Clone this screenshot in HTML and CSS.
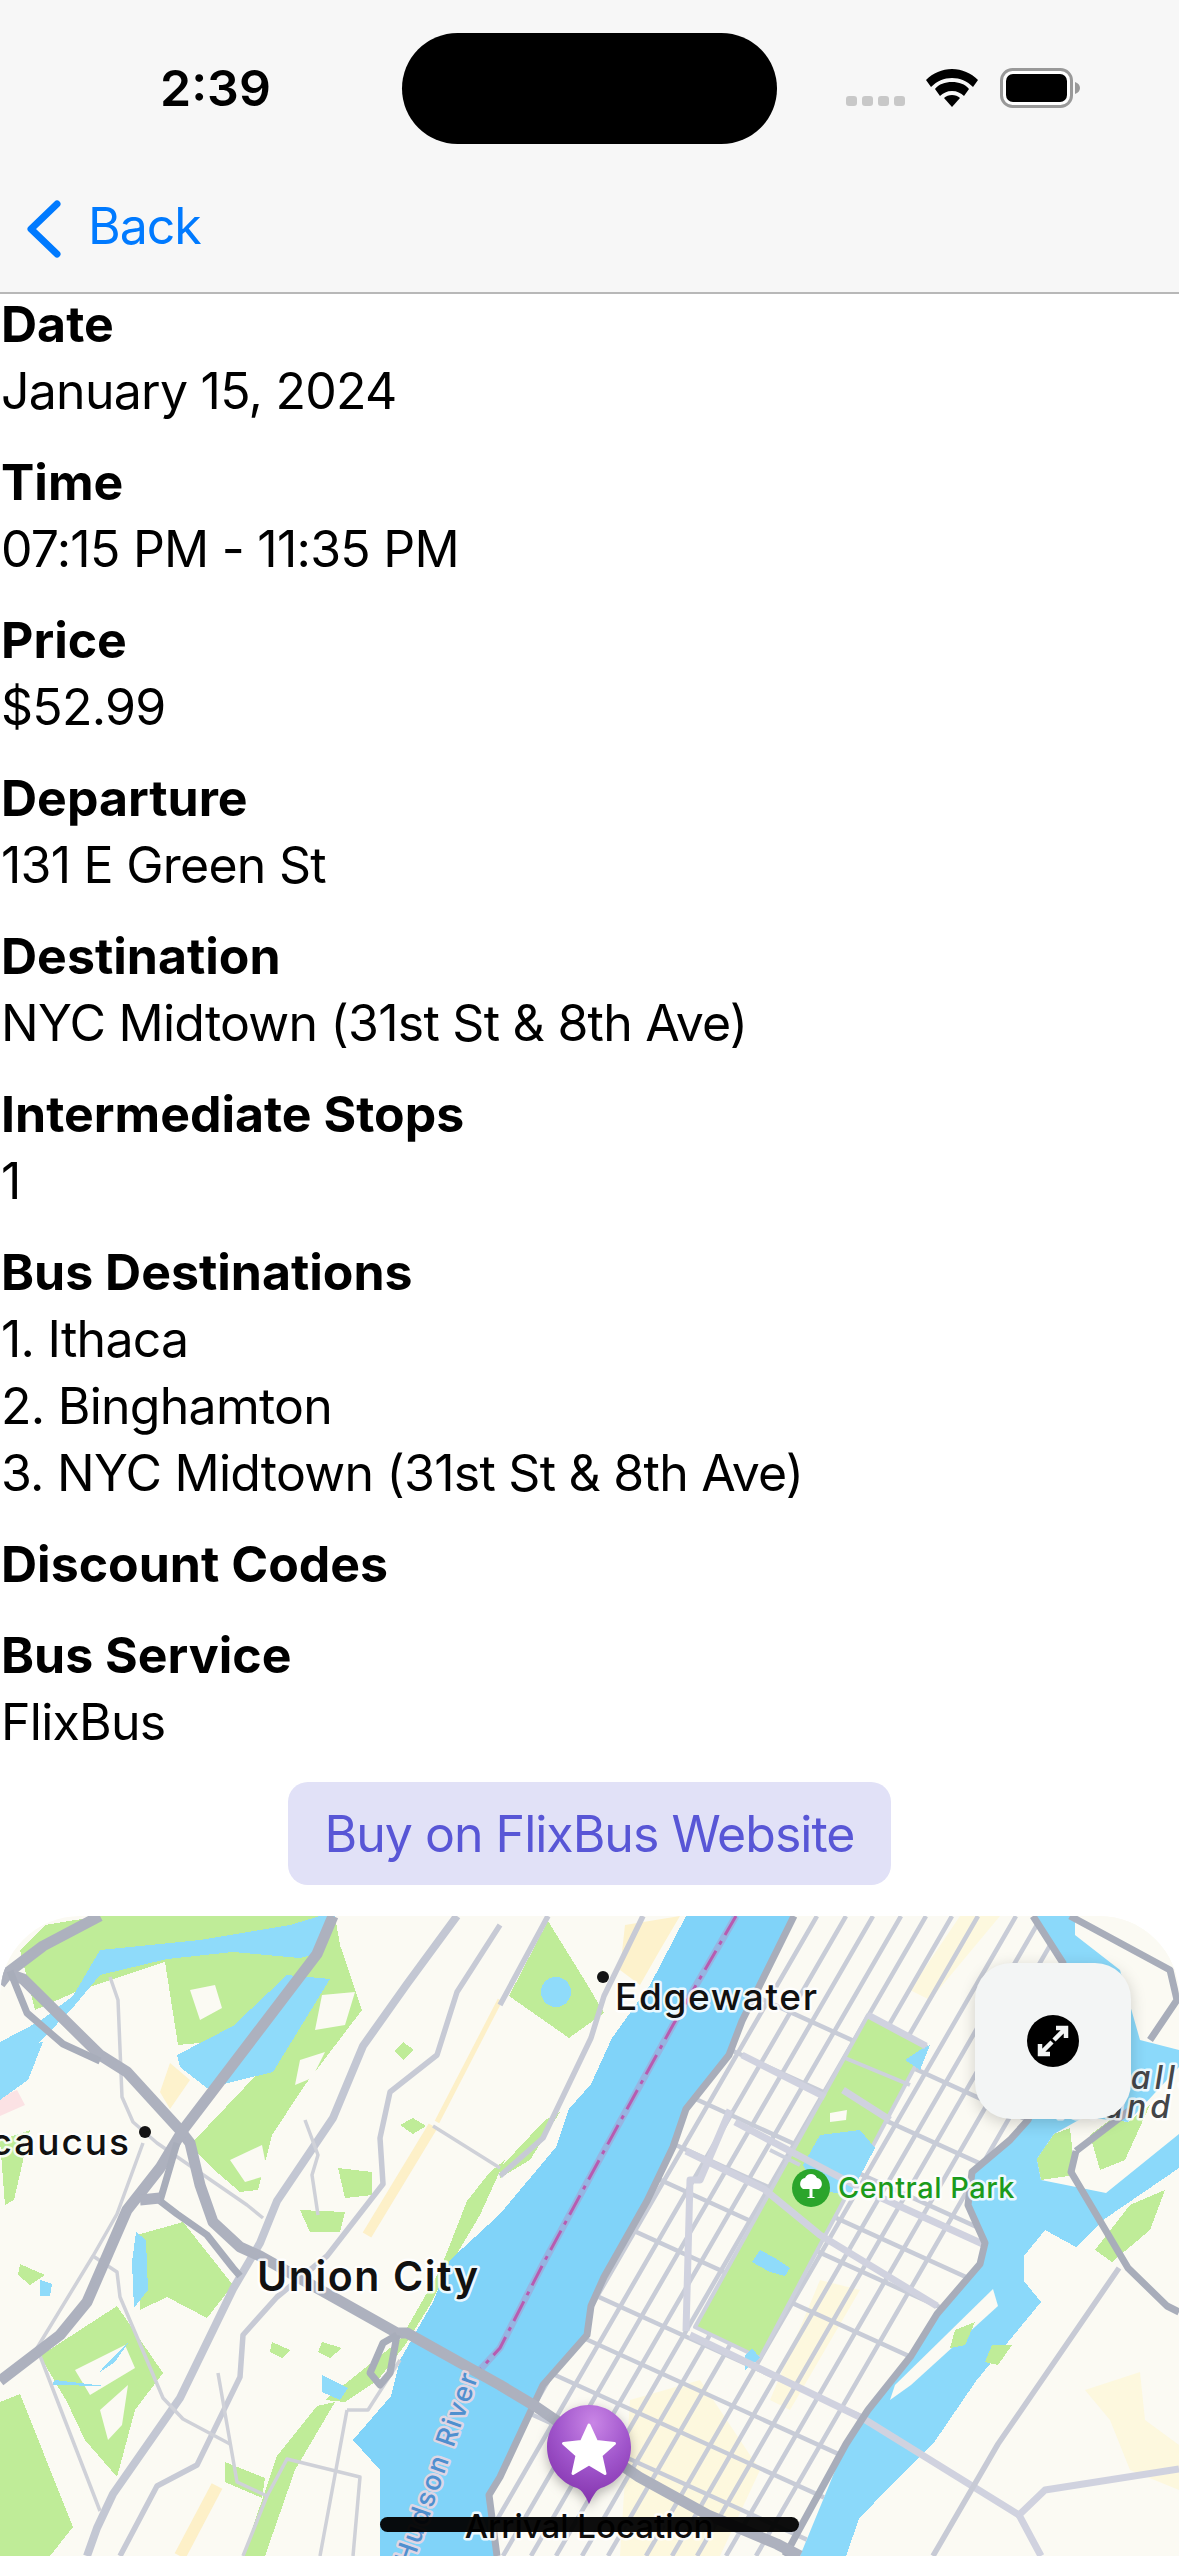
FILE: index.html
```html
<!DOCTYPE html>
<html lang="en">
<head>
<meta charset="utf-8">
<title>Trip details</title>
<link rel="stylesheet" href="styles.css">
</head>
<body>
<div class="page">
  <header class="top">
    <div class="status">
      <span class="clock">2:39</span>
      <div class="island"></div>
      <div class="indicators">
        <div class="signal"><i></i><i></i><i></i><i></i></div>
        <svg class="wifi" width="52" height="38" viewBox="0 0 52 38">
          <path class="ico-black" d="M26 0C16 0 7 4 0 11l5 7C11 12 18 9 26 9s15 3 21 9l5-7C45 4 36 0 26 0z"/>
          <path class="ico-black" d="M26 13c-7 0-13 2-17 7l5 7c3-3 7-5 12-5s9 2 12 5l5-7c-4-5-10-7-17-7z"/>
          <path class="ico-black" d="M26 26c-3 0-6 1-8 3l8 9 8-9c-2-2-5-3-8-3z"/>
        </svg>
        <svg class="battery" width="80" height="40" viewBox="0 0 80 40">
          <rect class="bat-edge" x="1.5" y="1.5" width="70" height="37" rx="11"/>
          <rect class="ico-black" x="6" y="6" width="61" height="28" rx="7"/>
          <path class="bat-tip" d="M75 14c3 1 5 3 5 6s-2 5-5 6z"/>
        </svg>
      </div>
    </div>
    <nav class="nav">
      <svg class="chev" width="36" height="60" viewBox="0 0 36 60">
        <polyline class="chev-line" points="31,5 5,30 31,55"/>
      </svg>
      <span class="back">Back</span>
    </nav>
  </header>

  <main class="details">
    <section class="item"><h2>Date</h2><p>January 15, 2024</p></section>
    <section class="item"><h2>Time</h2><p>07:15 PM - 11:35 PM</p></section>
    <section class="item"><h2>Price</h2><p>$52.99</p></section>
    <section class="item"><h2>Departure</h2><p>131 E Green St</p></section>
    <section class="item"><h2>Destination</h2><p>NYC Midtown (31st St &amp; 8th Ave)</p></section>
    <section class="item"><h2>Intermediate Stops</h2><p>1</p></section>
    <section class="item"><h2>Bus Destinations</h2><p>1. Ithaca</p><p>2. Binghamton</p><p>3. NYC Midtown (31st St &amp; 8th Ave)</p></section>
    <section class="item"><h2>Discount Codes</h2></section>
    <section class="item"><h2>Bus Service</h2><p>FlixBus</p></section>
  </main>

  <div class="buy-row"><a class="buy">Buy on FlixBus Website</a></div>

  <div class="map">
    <svg class="map-art" width="1179" height="640" viewBox="0 1916 1179 640">
      <defs>
        <radialGradient id="pinFill" cx="55%" cy="18%" r="80%">
          <stop offset="0" stop-color="#C985E6"/>
          <stop offset=".55" stop-color="#A055CB"/>
          <stop offset="1" stop-color="#8434AE"/>
        </radialGradient>
        <clipPath id="manhattan">
          <path d="M794 1916L742 2021 729 2055 686 2109 673 2147 647 2201 604 2277 591 2306 587 2335 543 2385 500 2477 489 2495 497 2556 800 2556 846 2444 868 2410 911 2356 937 2314 980 2264 985 2243 968 2205 972 2172 1010 2140 1028 2120 1065 2030 1063 1963 1033 1916z"/>
        </clipPath>
      </defs>
      <rect class="land" x="0" y="1916" width="1179" height="640"/>

      <!-- tan areas -->
      <path class="tan" d="M170 2063L190 2080 170 2109 160 2092z"/>
      <path class="tan-line w10" d="M433 2126L367 2235"/>
      <path class="tan-line w5" d="M500 2000L437 2122"/>
      <path class="tan-line w12" d="M217 2486L180 2556"/>
      <path class="tan" d="M625 1925L680 1916 660 1950 640 1985 620 1970z"/>
      <path class="pale-tan" d="M1085 2390L1140 2372 1145 2420 1179 2445 1179 2490 1130 2470 1110 2420z"/>
      <path class="pink" d="M0 2097L17 2090 25 2105 0 2116z"/>

      <!-- parks, New Jersey -->
      <path class="park" d="M20 1950L45 1925 100 1916 335 1916 340 1945 362 2010 305 2085 272 2135 258 2190 240 2192 212 2168 190 2145 280 2050 230 2040 178 2045 165 1962 80 1990 35 2010z"/>
      <path class="land" d="M190 1990L215 1985 222 2008 200 2020zM322 1995L355 1992 345 2025 315 2030zM300 2060L325 2052 312 2078 295 2085zM230 2160L262 2145 268 2175 245 2182z"/>
      <path class="park" d="M137 2235L183 2222 233 2285 207 2318 167 2297 140 2310z"/>
      <path class="park" d="M40 2356L117 2306 163 2373 135 2410 117 2477 85 2440 67 2402z"/>
      <path class="land" d="M75 2370L125 2345 135 2368 90 2395zM100 2410L128 2385 122 2425 108 2440z"/>
      <path class="park" d="M0 2402L20 2394 73 2527 50 2556 0 2556z"/>
      <path class="park" d="M490 2172L505 2160 480 2215 452 2262 430 2305 405 2345 378 2380 345 2402 325 2400 400 2340 440 2270 467 2201z"/>
      <path class="park" d="M317 2406L335 2402 295 2470 265 2556 243 2556 277 2456z"/>
      <path class="park" d="M225 2462L265 2478 262 2498 225 2482z"/>
      <path class="park" d="M403 2042L414 2050 403 2060 394 2051zM413 2118L426 2126 413 2134 400 2125zM338 2168L372 2172 372 2195 345 2198zM300 2210L345 2212 340 2232 310 2232zM20 2264L45 2275 30 2285 18 2275zM272 2342L290 2350 282 2358 270 2352zM322 2342L342 2348 330 2358 318 2352z"/>
      <path class="park" d="M548 1921L587 1984 604 2013 569 2038 509 1996z"/>
      <path class="park" d="M545 2120L560 2112 530 2160 500 2178 500 2168z"/>
      <path class="park" d="M0 2140L30 2130 14 2200 5 2205z"/>

      <!-- water -->
      <path class="water" d="M0 2042L40 2021 73 1996 100 1950 200 1940 290 1925 320 1916 335 1916 317 1954 300 1958 233 1952 167 1959 100 1975 75 2005 40 2042 0 2060z"/>
      <path class="water" d="M177 2055L233 2026 287 1975 330 1979 273 2072 207 2088 180 2067z"/>
      <path class="water" d="M0 2050L43 2042 28 2080 0 2100z"/>
      <path class="water" d="M136 2232L146 2240 148 2290 134 2308 132 2262zM40 2280L52 2284 50 2296 40 2296zM322 2375L348 2388 340 2400 322 2392zM105 2365L130 2340 115 2362 100 2372zM55 2380L105 2386 52 2385z"/>
      <circle class="water" cx="556" cy="1992" r="15"/>
      <path class="hudson" d="M686 1916L794 1916 742 2021 729 2055 686 2109 673 2147 647 2201 604 2277 591 2306 587 2335 543 2385 500 2477 489 2495 497 2556 380 2556 380 2470 353 2440 391 2396 400 2360 433 2302 450 2260 500 2214 556 2147 569 2109 591 2084 612 2038 650 1985z"/>
      <path class="east" d="M1037 1916L1075 1916 1179 2000 1179 2168 1106 2218 1076 2247 1045 2230 1024 2256 1024 2281 1041 2302 976 2381 933 2444 890 2486 859 2519 846 2556 780 2556 800 2528 846 2444 868 2410 911 2356 937 2314 980 2264 968 2205 972 2172 1028 2120 1065 2030z"/>
      <path class="land" d="M1075 1916L1179 1916 1179 2050 1140 2040 1120 1970 1075 1935z"/>
      <path class="land" d="M1037 2159L1054 2134 1084 2117 1128 2122 1179 2067 1179 2134 1106 2193 1041 2180z"/>
      <path class="park" d="M1037 2159L1054 2134 1070 2128 1075 2175 1041 2180zM1110 2120L1128 2122 1150 2105 1125 2160 1100 2170 1090 2135z"/>
      <path class="park" d="M1095 2250L1130 2205 1165 2190 1150 2230 1112 2262z"/>
      <path class="land" d="M993 2289L998 2306 911 2385 890 2400 895 2385z"/>
      <path class="park" d="M955 2330L975 2322 965 2345 950 2348zM992 2345L1012 2345 998 2365 985 2362z"/>

      <!-- Manhattan streets -->
      <g clip-path="url(#manhattan)">
        <rect class="land" x="480" y="1916" width="600" height="640"/>
        <path class="pale-tan" d="M630 2400L700 2380 760 2470 720 2556 620 2556z"/>
        <path class="pale-tan" d="M960 1916L1000 1916 930 2000 910 1990zM820 2280L860 2290 790 2410 770 2400z"/>
        <path class="street" d="M447 2556l370-640M476 2556l370-640M503 2556l370-640M531 2556l370-640M556 2556l370-640M582 2556l370-640M608 2556l370-640M646 2556l370-640M672 2556l370-640M697 2556l370-640M726 2556l370-640M756 2556l370-640"/>
        <path class="street" d="M500 1880l600 273M500 1945l600 273M500 2010l600 273M500 2065l600 273M500 2107l600 273M500 2170l600 273M500 2252l600 273M500 2300l600 273M500 2350l600 273M500 2400l600 273"/>
      </g>
      <path class="park" d="M868 2015L926 2046 760 2358 695 2327z"/>
      <path class="street-light" d="M845 2058L910 2085M770 2150L800 2165 M695 2327L868 2015 926 2046 760 2358z"/>
      <path class="water" d="M920 2050L930 2045 920 2070 905 2060zM820 2135L860 2130 875 2148 850 2195 815 2190 803 2165zM760 2250L775 2258 790 2268 785 2276 770 2272 752 2262zM745 2355L752 2348 760 2358 745 2370z"/>
      <path class="land" d="M830 2113L847 2110 846 2120 830 2122z"/>
      <path class="major-street" d="M690 2335L864 2419 1019 2515M735 2122L864 2190 985 2245M686 2151L764 2189 820 2235 937 2306M686 2331L690 2180 700 2180 730 2110M868 2015L926 2046 M742 2055L825 2097 M843 2090L890 2120"/>
      <path class="major-street" d="M1019 2515L1045 2490 1179 2469M1019 2515L1041 2556"/>

      <!-- purple line -->
      <path class="rail-under" d="M736 1916L673 2025 604 2151 543 2264 500 2348 477 2373"/>
      <path class="rail" d="M736 1916L673 2025 604 2151 543 2264 500 2348 477 2373"/>

      <!-- minor roads -->
      <path class="road" d="M457 1916L407 1984 363 2046 333 2118 277 2201 260 2243 233 2289 180 2398 113 2494 97 2528 87 2556"/>
      <path class="road-thin" d="M500 1925L457 1992 437 2055 390 2092 380 2138 383 2184 327 2256 277 2297 243 2335 240 2377 197 2465 157 2486 120 2556"/>
      <path class="road-fine" d="M110 1977L118 2000 122 2097 133 2122 157 2143 247 2205 263 2218"/>
      <path class="road-fine" d="M143 2143L117 2214 93 2256 37 2348 100 2511"/>
      <path class="road-fine" d="M93 2256L117 2272 120 2297 163 2398 183 2419 230 2444"/>
      <path class="road-fine" d="M218 2373L237 2482 267 2496 287 2459 360 2477 353 2556"/>
      <path class="road-fine" d="M267 2496L243 2556M347 2410L320 2556M347 2410L368 2410 400 2360"/>
      <path class="road-fine" d="M433 2126L500 2168M305 2120L318 2155 312 2175 318 2215"/>
      <path class="road-thin" d="M643 1916L604 1996 591 2038 543 2138 500 2176M548 1916L500 2005"/>
      <path class="road-thin" d="M1119 2268L998 2444 933 2556"/>

      <!-- highways -->
      <path class="hwy" d="M794 1916L742 2021 729 2055 686 2109 673 2147 647 2201 604 2277 591 2306 587 2335 543 2385 500 2477 489 2495 497 2556"/>
      <path class="hwy" d="M1033 1916L1063 1963 1065 2030 1028 2120 1010 2140 972 2172 968 2205 985 2243 980 2264 937 2314 911 2356 868 2410 846 2444 800 2528 785 2556"/>
      <path class="hwy" d="M1070 1916L1170 1970 1177 2000 1150 2040"/>
      <path class="hwy" d="M1076 2151L1071 2172 1128 2268 1167 2306 1179 2312"/>
      <path class="hwy" d="M1076 2151L1130 2110"/>
      <path class="hwy-big" d="M100 1916L43 1946 10 1971 0 1984"/>
      <path class="hwy-big" d="M0 1971L23 1979 100 2055 127 2072 180 2130 190 2143 200 2185 213 2222 240 2247 260 2256 333 2297 397 2333 407 2333 500 2385 535 2406 639 2477 708 2515 777 2544 800 2556"/>
      <path class="hwy-big" d="M333 1916L317 1954 183 2130 160 2168 127 2210 87 2302 60 2335 0 2381"/>
      <path class="hwy" d="M10 1971L27 2013 63 2044 100 2061"/>
      <path class="hwy" d="M177 2143L160 2201 177 2214 207 2235 233 2268 240 2276"/>
      <path class="hwy-big" d="M140 2200L160 2198"/>
      <path class="hwy" d="M397 2335L383 2343 370 2373 380 2385 390 2373 397 2335"/>

      <!-- labels -->
      <circle class="dot" cx="603" cy="1977" r="6"/>
      <text class="lbl lbl-edge" x="615" y="2010">Edgewater</text>
      <circle class="dot" cx="145" cy="2132" r="6"/>
      <text class="lbl lbl-sec" x="131" y="2155" text-anchor="end">Secaucus</text>
      <text class="lbl lbl-union" x="257" y="2291">Union City</text>
      <text class="lbl lbl-river" x="412" y="2566" transform="rotate(-70.7 412 2566)">Hudson River</text>
      <text class="lbl lbl-isle" x="1200" y="2089" text-anchor="end">Randalls</text>
      <text class="lbl lbl-isle" x="1174" y="2118" text-anchor="end">Island</text>

      <circle class="tree-bg" cx="811" cy="2188" r="19"/>
      <path class="tree" d="M811 2174a7 7 0 0 1 6 4 6 6 0 0 1 2 11h-6.500v8h2v1h-7v-1h2v-8h-6.500a6 6 0 0 1 2-11 7 7 0 0 1 6-4z"/>
      <text class="lbl lbl-park" x="838" y="2198">Central Park</text>

      <path class="pin" d="M589 2405c-23 0-42 19-42 42 0 19 13 36 30 41 5 2 9 9 12 16 3-7 7-14 12-16 17-5 30-22 30-41 0-23-19-42-42-42z"/>
      <path class="star" d="M589 2425l7.500 16.500 18 2-13.500 12 4 18-16-9.500-16 9.500 4-18-13.500-12 18-2z"/>
      <text class="lbl lbl-arrive" x="589" y="2538" text-anchor="middle">Arrival Location</text>
    </svg>

    <button class="expand" type="button" aria-label="Expand map">
      <svg width="52" height="52" viewBox="0 0 52 52">
        <circle class="ico-black" cx="26" cy="26" r="26"/>
        <path class="arrows" d="M27 25L38 14M29 13H39V23M25 27L14 38M23 39H13V29"/>
      </svg>
    </button>
  </div>

  <div class="home-bar"></div>
</div>
</body>
</html>
```

FILE: styles.css
```css
* { box-sizing: border-box; }
html, body { margin: 0; padding: 0; background: #fff; }
.page {
  position: relative;
  width: 1179px;
  height: 2556px;
  overflow: hidden;
  display: flex;
  flex-direction: column;
  font-family: Inter, "Liberation Sans", sans-serif;
  color: #000;
}

/* header */
.top {
  height: 294px;
  background: #f7f7f7;
  border-bottom: 2px solid #b8b8b8;
  display: flex;
  flex-direction: column;
}
.status {
  height: 177px;
  padding-top: 33px;
  display: flex;
  align-items: flex-start;
}
.clock {
  width: 402px;
  padding: 25px 0 0 160px;
  font-size: 50px;
  line-height: 60px;
  font-weight: 600;
}
.island {
  width: 375px;
  height: 111px;
  background: #000;
  border-radius: 56px;
}
.indicators {
  display: flex;
  align-items: flex-start;
  padding: 35px 0 0 69px;
}
.signal {
  display: flex;
  gap: 5px;
  margin-top: 28px;
  margin-right: 21px;
}
.signal i {
  display: block;
  width: 11px;
  height: 10px;
  border-radius: 3px;
  background: #c8c8c8;
}
.wifi { margin-top: 1px; margin-right: 22px; }
.ico-black { fill: #000; }
.bat-edge { fill: #fff; stroke: #999; stroke-width: 3; }
.bat-tip { fill: #999; }
.nav {
  flex: 1;
  display: flex;
  align-items: center;
  padding: 0 0 18px 26px;
}
.chev { margin-right: 26px; margin-top: 6px; }
.chev-line {
  fill: none;
  stroke: #007aff;
  stroke-width: 7;
  stroke-linecap: round;
  stroke-linejoin: round;
}
.back { font-size: 50px; line-height: 60px; color: #007aff; letter-spacing: -1px; }

/* details */
.details { margin-top: -3px; padding: 0 0 0 1px; display: flex; flex-direction: column; gap: 24px; }
.item h2, .item p {
  margin: 0;
  font-size: 50px;
  line-height: 67px;
}
.item h2 { font-weight: 700; }
.item p { font-weight: 400; letter-spacing: -0.75px; }

/* button */
.buy-row {
  display: flex;
  justify-content: center;
  padding-top: 26px;
}
.buy {
  width: 603px;
  height: 103px;
  display: flex;
  align-items: center;
  justify-content: center;
  background: #e1e1f7;
  border-radius: 20px;
  color: #5856d6;
  font-size: 50px;
  letter-spacing: -1px;
}

/* map */
.map {
  position: relative;
  margin-top: 31px;
  flex: 1;
  min-height: 0;
  border-radius: 80px 80px 0 0;
  overflow: hidden;
}
.map-art { display: block; }
.land { fill: #fbfaf3; }
.park { fill: #bfec98; shape-rendering: crispEdges; }
.water { fill: #8fdbfa; shape-rendering: crispEdges; }
.hudson { fill: #80d3f9; shape-rendering: crispEdges; }
.east { fill: #8bd9fa; shape-rendering: crispEdges; }
.tan { fill: #fdf2cc; }
.pale-tan { fill: #fdf8de; }
.pink { fill: #fbe2e4; }
.tan-line { fill: none; stroke: #fdf0c8; }
.w5 { stroke-width: 5; }
.w10 { stroke-width: 10; }
.w12 { stroke-width: 12; }
.street, .street-light, .major-street, .road, .road-thin, .road-fine,
.hwy, .hwy-big, .rail, .rail-under { fill: none; stroke-linejoin: round; }
.street { stroke: #c8ccd7; stroke-width: 4.500; }
.street-light { stroke: #cdd1dc; stroke-width: 4; }
.major-street { stroke: #d0d2df; stroke-width: 7; }
.road { stroke: #c3c7d3; stroke-width: 8; }
.road-thin { stroke: #c7cad5; stroke-width: 5.500; }
.road-fine { stroke: #cfd1d8; stroke-width: 3.500; }
.hwy { stroke: #a8adba; stroke-width: 7; }
.hwy-big { stroke: #adb1be; stroke-width: 11; }
.rail-under { stroke: #96b5e2; stroke-width: 7; }
.rail { stroke: #b75bb1; stroke-width: 3; stroke-dasharray: 22 7 4 7; }
.dot { fill: #141414; }
.lbl {
  font-family: Inter, "Liberation Sans", sans-serif;
  fill: #111;
  stroke: rgba(255, 255, 255, .85);
  stroke-width: 5px;
  paint-order: stroke;
  stroke-linejoin: round;
}
.lbl-edge { font-size: 37px; font-weight: 500; letter-spacing: 1.6px; }
.lbl-sec { font-size: 37px; font-weight: 500; letter-spacing: 2px; }
.lbl-union { font-size: 41px; font-weight: 600; letter-spacing: 1.6px; }
.lbl-river { font-size: 27px; font-weight: 500; letter-spacing: 2.500px; fill: #4f8fcf; stroke: rgba(240, 215, 225, .85); }
.lbl-isle { font-size: 32px; font-weight: 500; font-style: italic; letter-spacing: 4px; fill: #444649; }
.lbl-park { font-size: 29px; font-weight: 500; letter-spacing: .5px; fill: #1c9b1c; }
.lbl-arrive { font-size: 33px; font-weight: 500; }
.tree-bg { fill: #2ba52b; }
.tree { fill: #fff; }
.pin { fill: url(#pinFill); filter: drop-shadow(0 4px 6px rgba(0, 0, 0, .28)); }
.star { fill: #fff; stroke: #fff; stroke-width: 3; stroke-linejoin: round; }

.expand {
  position: absolute;
  top: 47px;
  right: 48px;
  width: 156px;
  height: 156px;
  padding: 0;
  border: 0;
  border-radius: 36px;
  background: #f3f5f5;
  box-shadow: 0 4px 16px rgba(0, 0, 0, .18);
  display: flex;
  align-items: center;
  justify-content: center;
}
.expand svg { display: block; }
.arrows { fill: none; stroke: #f3f5f5; stroke-width: 4.500; }

.home-bar {
  position: absolute;
  left: 380px;
  top: 2517px;
  width: 419px;
  height: 15px;
  border-radius: 8px;
  background: rgba(0, 0, 0, .95);
}
```
